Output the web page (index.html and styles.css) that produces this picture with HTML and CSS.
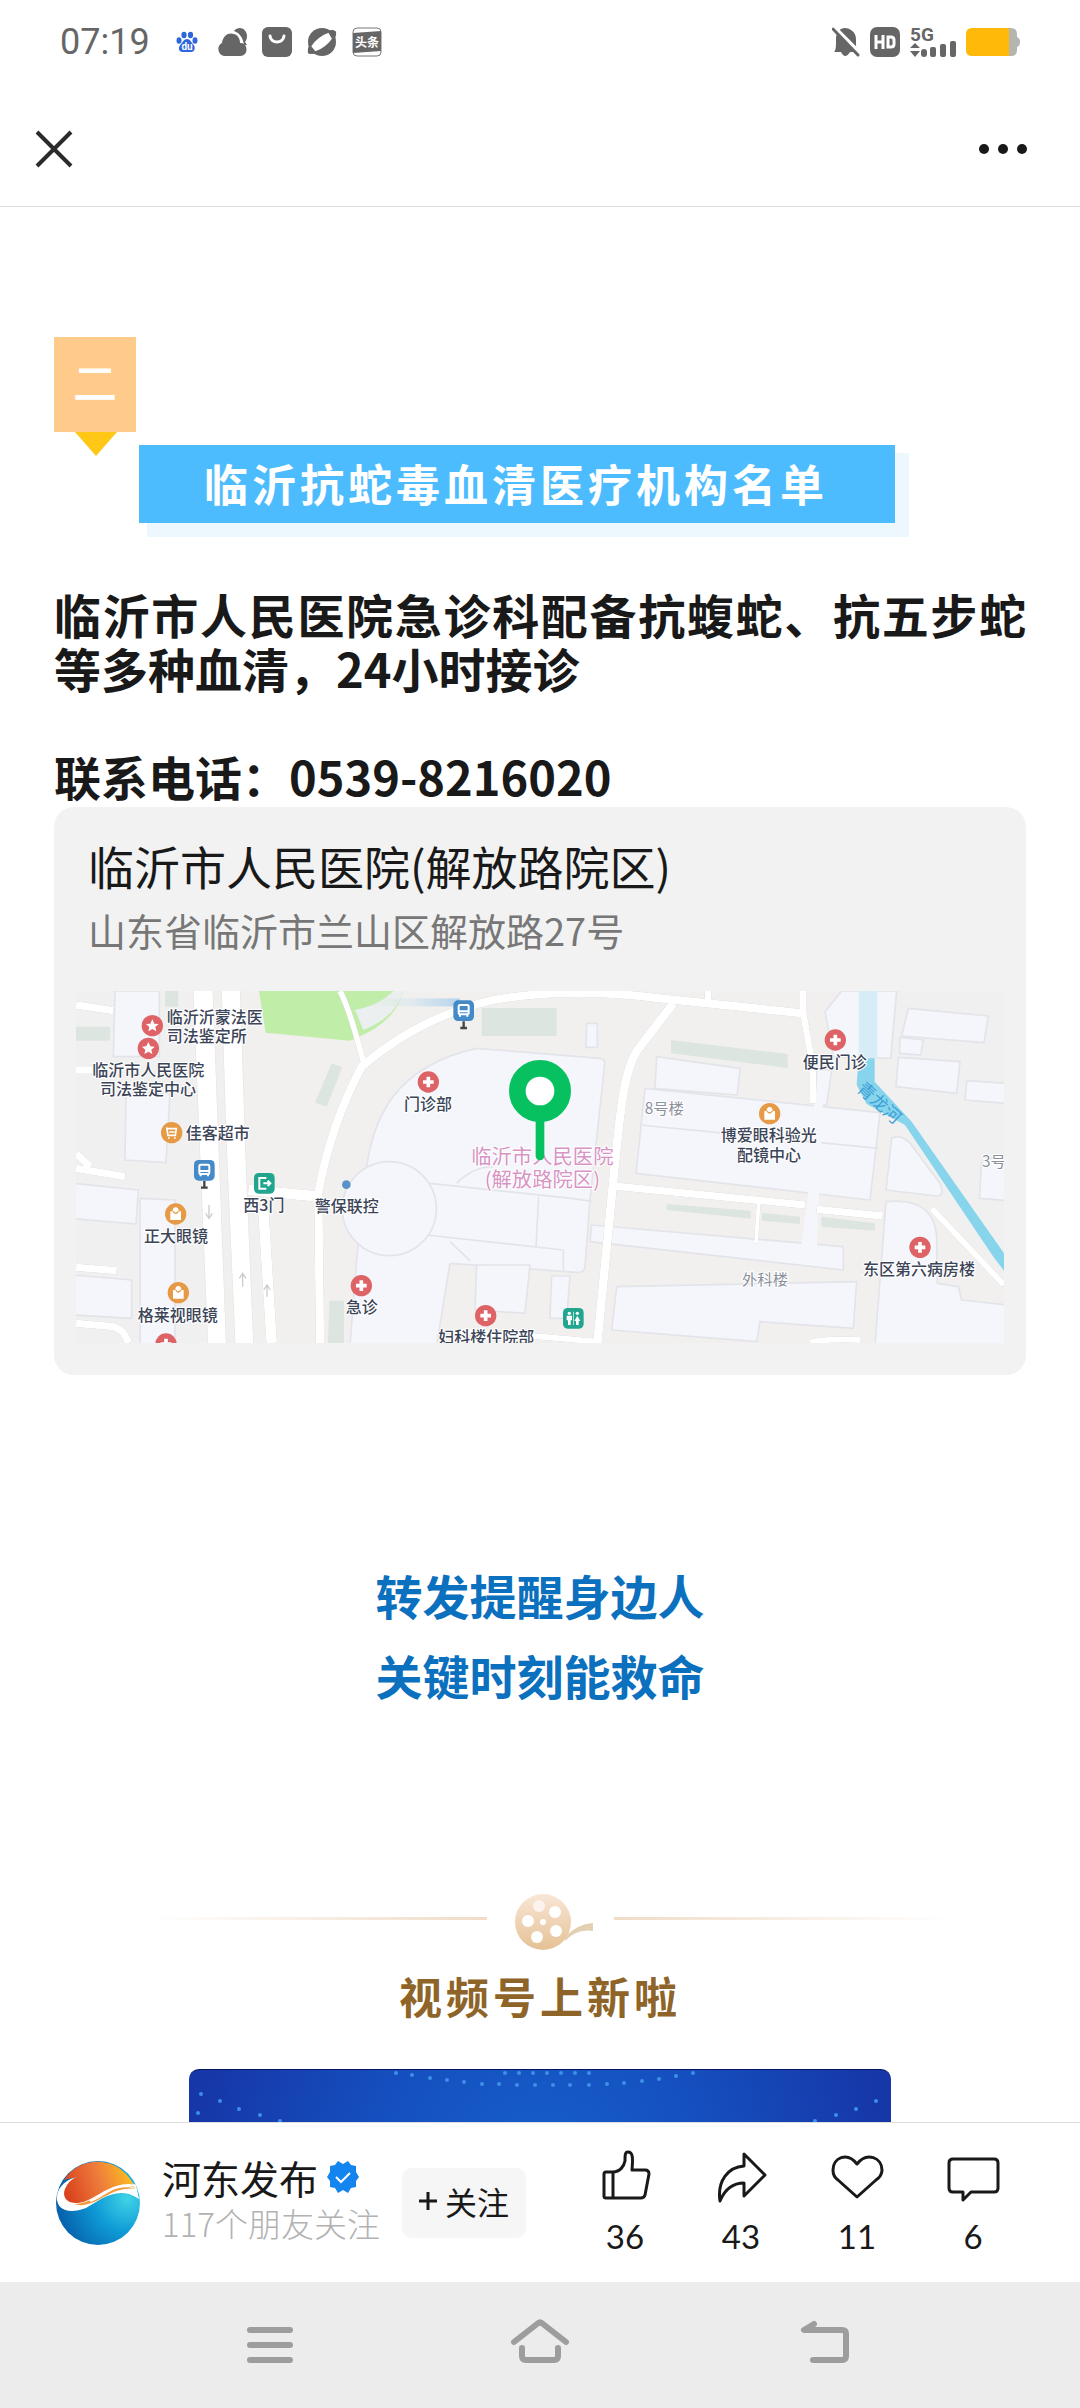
FILE: index.html
```html
<!DOCTYPE html>
<html lang="zh-CN">
  <head>
    <meta charset="UTF-8" />
    <meta name="viewport" content="width=device-width, initial-scale=1.0" />
    <title>河东发布</title>
    <link rel="stylesheet" href="styles.css">
  </head>
  <body>
    <div class="status-bar">
      <span class="clock">07:19</span>
      <div class="status-left">
        <svg width="30" height="30" viewBox="0 0 30 30">
          <g fill="#2f66dc">
            <ellipse cx="12" cy="8" rx="2.6" ry="3.3" />
            <ellipse cx="18.5" cy="8" rx="2.6" ry="3.3" />
            <ellipse cx="7" cy="13.5" rx="2.5" ry="3.2" />
            <ellipse cx="23" cy="13.5" rx="2.5" ry="3.2" />
            <path d="M15 12c3 0 4 3 6 5 3 3 2 8-2 8h-8c-5 0-5-5-2-8 2-2 3-5 6-5z" />
          </g>
          <text x="15" y="23" class="du">du</text>
        </svg>
        <svg width="30" height="30" viewBox="0 0 30 30" fill="#666">
          <path d="M7 29a7 7 0 0 1-2-13C6 8 12 5 17 7c4 1 6 5 6 9h1c7 0 8 13-1 13z" />
          <path d="M17 4c5-6 13-2 13 5 0 3-1 5-2 6l2 3h-3c-1-7-4-12-10-14z" />
        </svg>
        <svg width="30" height="30" viewBox="0 0 30 30">
          <rect width="30" height="30" rx="6" fill="#666" />
          <path d="M8 9c1 8 13 8 14 0" fill="none" stroke="#fff" stroke-width="3" stroke-linecap="round" />
        </svg>
        <svg width="30" height="30" viewBox="0 0 30 30">
          <circle cx="15" cy="15" r="14" fill="#666" />
          <ellipse cx="15" cy="15" rx="16" ry="6" fill="#fff" stroke="#666" stroke-width="2" transform="rotate(-38 15 15)" />
          <path d="M4 19Q-2 27 3 27L9 25zM21 5Q30 2 29 6L25 12z" fill="#666" />
        </svg>
        <svg width="30" height="30" viewBox="0 0 30 30">
          <rect x="1" y="1" width="28" height="28" rx="4" fill="#fff" stroke="#777" />
          <path d="M1 6L29 4V24L1 26z" fill="#666" />
          <text x="15" y="20" class="toutiao">头条</text>
        </svg>
      </div>
      <div class="status-right">
        <svg width="28" height="30" viewBox="0 0 28 30">
          <path d="M2 25c2-2 2-5 2-13C4 5 8 1 13 1s11 4 11 11c0 8 0 11 2 13h-8q-5 8-9 0z" fill="#666" />
          <path d="M3 1L28 26" stroke="#fff" stroke-width="4" />
          <path d="M1 2L26 28" stroke="#666" stroke-width="3" stroke-linecap="round" />
        </svg>
        <svg width="30" height="30" viewBox="0 0 30 30">
          <rect width="30" height="30" rx="7" fill="#666" />
          <path d="M6 8V22M13 8V22M6 15H13M18 10H21Q24 10 24 13V17Q24 20 21 20H18z" fill="none" stroke="#fff" stroke-width="3" />
        </svg>
        <svg width="46" height="30" viewBox="0 0 46 30" fill="#666">
          <text x="0" y="14" class="net">5G</text>
          <path d="M0 21L5 16L10 21zM0 24H10L5 30z" />
          <rect x="11" y="22" width="6" height="8" rx="3" />
          <rect x="20" y="20" width="6" height="10" rx="2" />
          <rect x="30" y="17" width="6" height="13" rx="2" />
          <rect x="40" y="14" width="6" height="16" rx="2" />
        </svg>
        <svg width="54" height="28" viewBox="0 0 54 28">
          <path d="M42 0h3q6 0 6 6v3q3 1 3 5t-3 5v3q0 6-6 6h-3z" fill="#b5b5b0" />
          <path d="M6 0H43V28H6Q0 28 0 22V6Q0 0 6 0z" fill="#ffb908" />
        </svg>
      </div>
    </div>

    <header class="top-bar">
      <button class="icon-button" aria-label="关闭">
        <svg width="40" height="40" viewBox="0 0 40 40">
          <path d="M3 3L37 37M37 3L3 37" stroke="#2b2b2b" stroke-width="4" />
        </svg>
      </button>
      <button class="icon-button" aria-label="更多">
        <svg width="50" height="40" viewBox="0 0 50 40" fill="#191919">
          <circle cx="6" cy="20" r="5" />
          <circle cx="25" cy="20" r="5" />
          <circle cx="44" cy="20" r="5" />
        </svg>
      </button>
    </header>

    <main class="article">
      <p class="text previous">及时到医院就诊。</p>

      <div class="number">二</div>
      <h2 class="banner">临沂抗蛇毒血清医疗机构名单</h2>

      <p class="text first">临沂市人民医院急诊科配备抗蝮蛇、抗五步蛇等多种血清，24小时接诊</p>
      <p class="text phone">联系电话：0539-8216020</p>

      <section class="location">
        <h3>临沂市人民医院(解放路院区)</h3>
        <p>山东省临沂市兰山区解放路27号</p>
        <svg class="map" viewBox="48 33 2784 1056">
          <defs>
            <g id="cross">
              <circle r="32" fill="#dd6366" />
              <path d="M-16 0H16M0-16V16" stroke="#fff" stroke-width="11" />
            </g>
            <g id="star">
              <circle r="32" fill="#dd6366" />
              <path d="M0-19L6-6L19-5L9 4L12 17L0 10L-12 17L-9 4L-19-5L-6-6z" fill="#fff" />
            </g>
            <g id="shop">
              <circle r="32" fill="#e69a45" />
              <path d="M-16-8H-9A9 12 0 0 1 9-8H16V18H-16z" fill="#fff" />
              <path d="M-8-8q8 12 16 0" fill="none" stroke="#e69a45" stroke-width="4" />
            </g>
            <g id="bus">
              <rect x="-31" y="-31" width="62" height="62" rx="14" fill="#4489c8" />
              <rect x="-15" y="-17" width="30" height="28" rx="4" fill="none" stroke="#fff" stroke-width="6" />
              <path d="M-15 2H15M-11 10V18M11 10V18" stroke="#fff" stroke-width="6" />
              <path d="M0 32V50M-10 52H10" stroke="#444" stroke-width="7" />
            </g>
            <linearGradient id="smear">
              <stop offset="0" stop-color="#c8ecb8" stop-opacity="0" />
              <stop offset="0.5" stop-color="#cfe5ee" />
              <stop offset="1" stop-color="#7db8e4" />
            </linearGradient>
          </defs>

          <rect x="48" y="33" width="2784" height="1056" fill="#f2f0ef" />
          <path d="M48 33H400L440 1089H48z" fill="#f0f0f0" />
          <path d="M2460 33H2832V900L2600 600L2500 430z" fill="#f0f0f0" />

          <!-- lawns -->
          <path d="M597 33H1030C1010 110 950 150 870 182L617 158z" fill="#c0eda8" />
          <path d="M885 90Q960 75 1000 33H1030Q1010 110 910 150z" fill="#eceff0" />
          <g fill="#dde5e1">
            <path d="M315 33H355V80H315zM48 140H150V182H48zM815 250L847 262L800 380L765 368zM808 962H852V1089H804z" />
            <path d="M1265 84H1490V168H1265zM1833 180L2183 222V264L1833 220zM1820 672L2072 692V716L1820 690zM2106 698L2220 710V732L2106 722zM2284 710L2445 730V752L2284 740z" />
          </g>

          <!-- buildings -->
          <g class="building">
            <path d="M165 33L298 33V230H160zM198 340H330L318 548L195 540zM40 610L235 630L228 732L40 716zM240 655L345 660V1095H240zM40 885L215 900V1015L40 1005z" />
            <path d="M920 560C940 420 1000 260 1250 205L1620 235Q1636 238 1634 252L1590 660L1575 860Q1572 880 1550 877L1170 850L1130 1095H870L895 780z" />
            <path d="M1190 610Q1240 560 1300 560M1110 610L1535 655L1595 664M1436 650L1428 802M1100 765L1510 810V872M1170 785L1230 842" fill="none" />
            <path d="M1250 855H1410L1395 1000L1245 990zM1475 888H1530L1520 1015H1470zM1580 130H1612V202H1578z" />
            <circle cx="988" cy="686" r="141" />
            <path d="M1595 735L2350 800L2350 870L1590 785z" />
            <path d="M1790 230L2040 265L2032 345L1785 325z" />
            <path d="M1755 325L2460 398L2430 660L1728 580z" />
            <path d="M1740 435L2455 505" />
            <path d="M1670 920L2390 905L2380 1045L2100 1025L2090 1085L1655 1050z" />
            <path d="M2295 95L2345 33H2510L2492 235L2320 230zM2270 270H2315L2300 375H2265z" />
            <path d="M2265 330H2290L2270 820H2220L2245 640z" stroke="none" />
            <path d="M2545 85L2785 108L2772 188L2525 168zM2520 172L2590 180L2582 225L2518 220zM2515 232L2700 245L2690 340L2508 320zM2720 302L2840 310V370L2715 360z" />
            <path d="M2495 475Q2520 460 2550 490L2640 610Q2655 650 2630 648L2478 630zM2765 545L2840 520V662L2758 655z" />
            <path d="M2478 665Q2620 650 2630 770L2632 910L2695 920L2705 960L2840 975V1095H2445z" />
          </g>

          <!-- river -->
          <path d="M2396 33H2452V235H2396z" fill="#d6edf8" />
          <path d="M2396 235H2444V305L2555 425L2832 820V872L2800 830L2535 435L2420 372L2390 315z" fill="#86d5ec" />

          <g class="roads">
            <path d="M400 33H458L498 1089H444zM485 33H540L560 620L580 1089H526L500 500z" fill="#fff" />
            <path d="M48 75L160 92M48 270H120M48 520L90 560M48 565L195 590M48 862L170 872M48 1030L160 1040Q195 1050 205 1089" stroke-width="22" />
            <path d="M565 630L780 650M610 690L635 1089" stroke-width="32" />
            <path d="M780 1089L775 640Q810 440 905 260Q1080 110 1300 60Q1520 20 1800 55L2230 100" stroke-width="25" />
            <path d="M840 33Q870 90 910 245" stroke-width="17" />
            <path d="M1840 70L1740 200C1690 260 1680 400 1658 620L1612 1089" stroke-width="26" />
            <path d="M1944 33V70M2230 33V100L2258 260V370" stroke-width="20" />
            <path d="M1660 618L2235 675M2270 688L2468 708" stroke-width="22" />
            <path d="M2096 670L2088 790" stroke-width="12" />
            <path d="M2615 685L2832 915M2250 1089Q2290 1075 2400 1080M1200 1055Q1350 1060 1610 1085" stroke-width="18" />
          </g>
          <path class="arrows" d="M447 675V715M437 700L447 715L457 700M548 880V920M538 895L548 880L558 895M621 915V950M611 930L621 915L631 930" />

          <rect x="900" y="55" width="300" height="24" fill="url(#smear)" opacity="0.5" />

          <use href="#star" x="277" y="137" />
          <use href="#star" x="265" y="205" />
          <g transform="translate(335 458)">
            <circle r="32" fill="#e69a45" />
            <path d="M-17-12H14L11 8H-11L-15-16M-11 16H-6M7 16H12M-7-2H9" fill="none" stroke="#fff" stroke-width="5" />
          </g>
          <use href="#bus" x="433" y="571" />
          <use href="#bus" x="1211" y="92" />
          <g transform="translate(613 610)">
            <rect x="-31" y="-31" width="62" height="62" rx="14" fill="#22a58f" />
            <path d="M6-16H-15V16H6M-3 0H18M10-8L18 0L10 8" fill="none" stroke="#fff" stroke-width="6" />
          </g>
          <use href="#shop" x="347" y="702" />
          <use href="#shop" x="355" y="938" />
          <use href="#shop" x="2129" y="401" />
          <use href="#cross" x="1105" y="306" />
          <use href="#cross" x="904" y="917" />
          <use href="#cross" x="1277" y="1007" />
          <use href="#cross" x="2326" y="180" />
          <use href="#cross" x="2580" y="802" />
          <use href="#cross" x="318" y="1092" />
          <circle cx="859" cy="614" r="13" fill="#5a92c8" />
          <g transform="translate(1540 1015)">
            <rect x="-31" y="-31" width="62" height="62" rx="14" fill="#22a58f" />
            <g fill="#fff">
              <circle cx="-12" cy="-15" r="5" />
              <circle cx="12" cy="-15" r="5" />
              <path d="M-20-8H-4V6H-8V20H-16V6H-20zM12-8L21 8H16V20H8V8H3z" />
              <path d="M-1-20H1V20H-1z" />
            </g>
          </g>

          <g class="places">
            <text x="320" y="128">临沂沂蒙法医</text>
            <text x="320" y="185">司法鉴定所</text>
            <text x="97" y="288">临沂市人民医院</text>
            <text x="120" y="346">司法鉴定中心</text>
            <text x="377" y="477">佳客超市</text>
            <text x="550" y="692">西3门</text>
            <text x="764" y="695">警保联控</text>
            <text x="252" y="785">正大眼镜</text>
            <text x="233" y="1022">格莱视眼镜</text>
            <text x="1032" y="390">门诊部</text>
            <text x="857" y="1000">急诊</text>
            <text x="1135" y="1088">妇科楼住院部</text>
            <text x="2228" y="263">便民门诊</text>
            <text x="1982" y="484">博爱眼科验光</text>
            <text x="2031" y="542">配镜中心</text>
            <text x="2409" y="886">东区第六病房楼</text>
          </g>
          <g class="blocks">
            <text x="1754" y="402">8号楼</text>
            <text x="2046" y="914">外科楼</text>
            <text x="2766" y="562">3号</text>
          </g>
          <text class="river-name" transform="translate(2388 330) rotate(42)">青龙河</text>
          <g class="hospital">
            <text x="1447" y="553">临沂市人民医院</text>
            <text x="1447" y="622">(解放路院区)</text>
          </g>

          <path d="M1440 400V528" stroke="#07c160" stroke-width="26" stroke-linecap="round" />
          <circle cx="1440" cy="333" r="68" fill="#fff" stroke="#07c160" stroke-width="50" />
        </svg>
      </section>

      <p class="slogan">转发提醒身边人<br />关键时刻能救命</p>

      <div class="divider">
        <span class="line"></span>
        <svg width="127" height="64" viewBox="0 0 127 64">
          <defs>
            <linearGradient id="gold" x1="0" y1="0" x2="0" y2="1">
              <stop offset="0" stop-color="#f8e6d6" />
              <stop offset="1" stop-color="#e5c195" />
            </linearGradient>
          </defs>
          <circle cx="56" cy="36" r="28" fill="url(#gold)" />
          <path d="M78 51Q90 38 106 37V45Q90 42 78 55z" fill="#e3cfb2" />
          <g fill="#fff">
            <circle cx="52" cy="20" r="6" fill="#fdf3ee" />
            <circle cx="68" cy="26" r="6" />
            <circle cx="69" cy="45" r="6" />
            <circle cx="50" cy="51" r="6" />
            <circle cx="41" cy="35" r="6" />
            <circle cx="56" cy="36" r="3" />
          </g>
        </svg>
        <span class="line right"></span>
      </div>
      <h3 class="video-title">视频号上新啦</h3>
      <div class="video">
        <svg viewBox="0 0 702 395" fill="#3d8fe8">
          <g>
            <circle cx="207" cy="3" r="2" /><circle cx="223" cy="5" r="2" /><circle cx="241" cy="8" r="2" />
            <circle cx="258" cy="10" r="2" /><circle cx="275" cy="12" r="2" /><circle cx="293" cy="14" r="2" />
            <circle cx="310" cy="14" r="2" /><circle cx="328" cy="15" r="2" /><circle cx="346" cy="15" r="2" />
            <circle cx="364" cy="15" r="2" /><circle cx="381" cy="15" r="2" /><circle cx="400" cy="15" r="2" />
            <circle cx="418" cy="14" r="2" /><circle cx="435" cy="13" r="2" /><circle cx="453" cy="11" r="2" />
            <circle cx="470" cy="9" r="2" /><circle cx="487" cy="6" r="2" /><circle cx="504" cy="3" r="2" />
            <circle cx="316" cy="3" r="2" /><circle cx="330" cy="3" r="2" /><circle cx="344" cy="3" r="2" />
            <circle cx="358" cy="3" r="2" /><circle cx="372" cy="3" r="2" /><circle cx="386" cy="3" r="2" />
            <circle cx="400" cy="3" r="2" />
          </g>
          <g>
            <circle cx="12" cy="24" r="2" /><circle cx="31" cy="31" r="2" /><circle cx="50" cy="39" r="2" />
            <circle cx="71" cy="45" r="2" /><circle cx="9" cy="43" r="2" /><circle cx="91" cy="51" r="2" />
            <circle cx="687" cy="31" r="2" /><circle cx="667" cy="39" r="2" /><circle cx="647" cy="45" r="2" />
            <circle cx="626" cy="51" r="2" />
          </g>
        </svg>
      </div>
    </main>

    <footer class="account-bar">
      <svg class="avatar" viewBox="0 0 84 84">
        <defs>
          <linearGradient id="sun" x1="0" y1="0.6" x2="1" y2="0.4">
            <stop offset="0" stop-color="#d9421c" />
            <stop offset="0.5" stop-color="#ee7a3c" />
            <stop offset="1" stop-color="#fdc21e" />
          </linearGradient>
          <radialGradient id="sea" cx="0.85" cy="0.45" r="0.8">
            <stop offset="0" stop-color="#3fd3e6" />
            <stop offset="0.5" stop-color="#0e9ad6" />
            <stop offset="1" stop-color="#0765ae" />
          </radialGradient>
        </defs>
        <circle cx="42" cy="42" r="42" fill="url(#sea)" />
        <path d="M20 16C6 20 1 30 1 36C0 48 12 54 30 47C46 38 62 24 83 38L80 24L60 14z" fill="#fff" />
        <path d="M8 19C24-7 66-6 79 27C60 18 45 34 30 40C14 46 5 38 9 28Q12 20 20 16Q12 18 8 19z" fill="url(#sun)" />
        <path d="M18 43C42 42 56 20 81 28C62 25 50 36 38 41Q26 46 18 43z" fill="#f59a3c" />
        <path d="M34 40C48 36 58 20 80 25" fill="none" stroke="#fff" stroke-width="2" />
      </svg>
      <div class="account">
        <a href="#" class="name">河东发布
          <svg width="32" height="32" viewBox="0 0 32 32">
            <path d="M16 3L21 0L24 4L29 5L29 11L32 16L29 20L29 26L24 27L21 32L16 29L11 32L8 27L3 26L3 20L0 16L3 11L3 5L8 4L11 0z" fill="#1485ee" />
            <path d="M9 16L14 21L23 12" fill="none" stroke="#fff" stroke-width="2" />
          </svg>
        </a>
        <span class="friends">117个朋友关注</span>
      </div>
      <button class="follow">
        <svg width="18" height="18" viewBox="0 0 18 18"><path d="M0 9H18M9 0V18" stroke="#191919" stroke-width="3" /></svg>
        关注
      </button>
      <div class="actions">
        <button>
          <svg viewBox="0 0 60 60"><path d="M18 25V51M11 51Q9 51 9 49V27Q9 25 11 25H18C25 25 29 19 30 14C30 8 30 5 33 5C38 5 38 11 37 23H50Q54 23 54 27L50 48Q49 51 46 51H11z" /></svg>
          <span>36</span>
        </button>
        <button>
          <svg viewBox="0 0 60 60"><path d="M33 7L54 28L33 49V36C22 36 14 42 9 54C6 34 17 20 33 19z" /></svg>
          <span>43</span>
        </button>
        <button>
          <svg viewBox="0 0 60 60"><path d="M30 17C20 4 6 11 6 23C6 28 8 31 11 33L30 50L49 33C52 31 55 28 55 23C55 11 40 4 30 17z" /></svg>
          <span>11</span>
        </button>
        <button>
          <svg viewBox="0 0 60 60"><path d="M10 12H51Q55 12 55 16V41Q55 45 51 45H28L20 53V45H10Q6 45 6 41V16Q6 12 10 12z" /></svg>
          <span>6</span>
        </button>
      </div>
    </footer>

    <nav class="system-nav">
      <button aria-label="菜单">
        <svg viewBox="0 0 80 60"><path d="M20 15H60M20 30H60M20 45H60" /></svg>
      </button>
      <button aria-label="主页">
        <svg viewBox="0 0 80 60"><path d="M14 27L37 9Q40 6 43 9L66 27M22 33V41Q22 45 26 45H54Q58 45 58 41V33" /></svg>
      </button>
      <button aria-label="返回">
        <svg viewBox="0 0 80 60"><path d="M44 9L34 15H72Q76 15 76 19V41Q76 45 72 45H43" /></svg>
      </button>
    </nav>
  </body>
</html>
```
FILE: styles.css
```css
* {
  margin: 0;
  padding: 0;
  box-sizing: border-box;
}

body {
  height: 100vh;
  display: flex;
  flex-direction: column;
  background: #fff;
  color: #191919;
  font-family: "Noto Sans CJK SC", "Noto Sans", sans-serif;
}

button {
  border: none;
  background: none;
  color: inherit;
  font-family: inherit;
  cursor: pointer;
}

svg {
  display: block;
}

/* Status bar */
.status-bar {
  flex: none;
  height: 84px;
  padding: 0 60px;
  display: flex;
  align-items: center;
}

.clock {
  font-family: Roboto, sans-serif;
  font-size: 36px;
  color: #666;
}

.status-left {
  display: flex;
  gap: 15px;
  margin-left: 22px;
}

.status-right {
  display: flex;
  align-items: center;
  gap: 10px;
  margin-left: auto;
}

.du,
.toutiao {
  fill: #fff;
  text-anchor: middle;
  font-weight: 700;
}

.du {
  font-family: Roboto, sans-serif;
  font-size: 10px;
}

.toutiao {
  font-size: 12px;
}

.net {
  font-family: Roboto, sans-serif;
  font-size: 19px;
  font-weight: 700;
}

/* Header */
.top-bar {
  flex: none;
  height: 123px;
  padding: 8px 52px 0 34px;
  display: flex;
  align-items: center;
  justify-content: space-between;
  border-bottom: 1px solid #dedede;
}

/* Article */
.article {
  flex: 1;
  min-height: 0;
  overflow: hidden;
  padding: 0 54px;
}

.text {
  font-size: 47px;
  line-height: 54px;
  font-weight: 700;
  text-align: justify;
}

/* scrolled under the header */
.previous {
  margin-top: -54px;
}

.first {
  margin-top: 64px;
}

.phone {
  margin-top: 54px;
}

.number {
  position: relative;
  width: 82px;
  margin-top: 130px;
  padding-bottom: 7px;
  background: #ffcb8a;
  color: #fff;
  font-size: 44px;
  line-height: 88px;
  font-weight: 500;
  text-align: center;
}

.number::after {
  content: "";
  position: absolute;
  top: 100%;
  left: 21px;
  border: 21px solid transparent;
  border-top: 24px solid #ffc817;
  border-bottom: none;
}

.banner {
  width: fit-content;
  margin: 13px 0 0 85px;
  padding: 0 67px 2px 65px;
  background: #4cbcfe;
  box-shadow: 11px 11px 0 3px #ecf7fe;
  color: #fff;
  font-size: 44px;
  line-height: 76px;
  letter-spacing: 4px;
}

.location {
  margin-top: 4px;
  padding: 28px 22px 32px;
  background: #f2f2f2;
  border-radius: 20px;
}

.location h3 {
  padding: 0 12px;
  font-size: 46px;
  line-height: 60px;
  font-weight: 400;
}

.location p {
  margin: 10px 0 36px;
  padding: 0 12px;
  color: #777;
  font-size: 38px;
  line-height: 50px;
}

/* Map */
.map {
  width: 100%;
}

.building {
  fill: #f5f6fb;
  stroke: #e3e4e9;
  stroke-width: 5;
  stroke-linejoin: round;
}

.roads {
  fill: none;
  stroke: #fff;
  filter: drop-shadow(0 0 2px #bbb);
}

.arrows {
  fill: none;
  stroke: #ccc;
  stroke-width: 4;
}

.places,
.blocks,
.hospital {
  stroke: #fff;
  stroke-width: 6;
  paint-order: stroke;
}

.places {
  fill: #3c4557;
  font-size: 48px;
  font-weight: 500;
}

.blocks {
  fill: #8b909b;
  font-size: 46px;
}

.hospital {
  fill: #d794c4;
  font-size: 61px;
  text-anchor: middle;
}

.river-name {
  fill: #3d9fd6;
  font-size: 52px;
}

/* Closing part */
.slogan {
  margin-top: 180px;
  color: #0b70bd;
  font-size: 47px;
  line-height: 80px;
  font-weight: 700;
  text-align: center;
}

.divider {
  display: flex;
  align-items: center;
  margin-top: 171px;
  padding: 0 74px 0 94px;
}

.line {
  flex: 1;
  height: 3px;
  background: linear-gradient(to right, #fff, #f0dcc8);
}

.line.right {
  background: linear-gradient(to left, #fff, #f0dcc8);
}

.video-title {
  margin-top: 15px;
  color: #8f6428;
  font-size: 43px;
  line-height: 60px;
  letter-spacing: 4px;
  text-align: center;
}

.video {
  margin: 44px 135px 0;
  border-top: 1px solid #06155e;
  border-radius: 10px;
  overflow: hidden;
  background: radial-gradient(circle at 50% 25%, #165fca, #1550c0 35%, #1637a8 75%);
}

/* Account bar */
.account-bar {
  flex: none;
  height: 160px;
  padding: 0 49px 0 56px;
  display: flex;
  align-items: center;
  border-top: 1px solid #dedede;
}

.avatar {
  width: 84px;
}

.account {
  margin: 0 22px;
  padding-bottom: 6px;
}

.name {
  display: flex;
  align-items: center;
  gap: 9px;
  color: #191919;
  font-size: 39px;
  line-height: 46px;
  text-decoration: none;
}

.friends {
  display: block;
  color: #b2b2b2;
  font-size: 33px;
  line-height: 46px;
  font-weight: 300;
}

.follow {
  height: 70px;
  padding: 0 17px 3px;
  display: flex;
  align-items: center;
  gap: 8px;
  background: #f6f6f6;
  border-radius: 10px;
  font-size: 32px;
}

.actions {
  display: flex;
  margin-left: auto;
}

.actions button {
  width: 116px;
  display: flex;
  flex-direction: column;
  align-items: center;
  gap: 6px;
  font-family: Lato, sans-serif;
  font-size: 33px;
  line-height: 46px;
}

.actions svg {
  width: 60px;
  fill: none;
  stroke: #191919;
  stroke-width: 3;
  stroke-linejoin: round;
}

/* System navigation */
.system-nav {
  flex: none;
  height: 126px;
  padding: 0 135px;
  display: flex;
  background: #ececec;
}

.system-nav button {
  flex: 1;
  display: flex;
  align-items: center;
  justify-content: center;
}

.system-nav svg {
  width: 80px;
  fill: none;
  stroke: #9d9d9d;
  stroke-width: 6;
  stroke-linecap: round;
  stroke-linejoin: round;
}
```
